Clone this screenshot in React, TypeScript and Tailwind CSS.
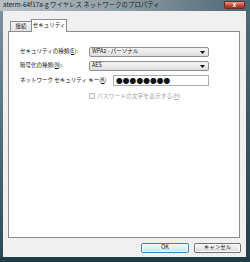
const font = "font-['Meiryo','Noto_Sans_CJK_JP',sans-serif]";

function Arrow() {
  return (
    <svg width="5" height="3" viewBox="0 0 5 3" className="shrink-0">
      <path d="M0 0h5L2.5 3z" fill="#111" />
    </svg>
  );
}

function Combo({ value }: { value: string }) {
  return (
    <div className="w-[120px] h-[10px] flex items-center pl-[2px] pr-[3px] rounded-[2px] border border-[#8e8f8f] bg-gradient-to-b from-[#f4f4f4] via-[#ebebeb] to-[#dcdcdc] text-[5.5px] leading-none text-[#111]">
      <span className="flex-1">{value}</span>
      <Arrow />
    </div>
  );
}

export default function App() {
  return (
    <div className={`w-[250px] h-[262px] flex flex-col bg-[#2b4754] ${font}`}>
      {/* title bar */}
      <div className="h-[11px] flex items-start pl-[3px] pr-[5px] bg-gradient-to-r from-[#b8c2c6] via-[#8d9ca3] to-[#4b6672]">
        <span className="mt-[2px] text-[6.4px] leading-none text-[#1c1c1c] whitespace-nowrap">
          aterm-64f17a-g ワイヤレス ネットワークのプロパティ
        </span>
        <div className="ml-auto mt-[1px] w-[21px] h-[8px] flex items-center justify-center rounded-b-[2px] border border-[#6b2a24] bg-gradient-to-b from-[#e59a8c] via-[#c9513f] to-[#a9281a]">
          <span className="text-[6px] leading-none font-bold text-white">x</span>
        </div>
      </div>

      <div className="flex-1 flex">
        <div className="w-[3px] bg-gradient-to-b from-[#7e939c] to-[#2a4a58]" />
        <div className="flex-1 flex flex-col bg-[#f0f0f0] pt-[8px] pl-[5px] pr-[6px] pb-[4px]">
          {/* tabs */}
          <div className="flex items-end pl-[2px] h-[12px] text-[5.5px] leading-none text-[#111]">
            <div className="h-[10px] w-[22px] flex items-center justify-center border border-b-0 border-[#898c95] bg-gradient-to-b from-[#f6f6f6] to-[#e3e3e3]">
              接続
            </div>
            <div className="relative z-10 -mb-px h-[13px] w-[36px] flex items-center justify-center border border-b-0 border-[#898c95] bg-white -ml-px">
              セキュリティ
            </div>
          </div>

          {/* panel */}
          <div className="flex-1 border border-[#898c95] bg-white pt-[15px] pl-[11px] text-[5.5px] leading-none text-[#111]">
            <div className="flex flex-col gap-[4px] w-[189px]">
              <div className="flex items-center">
                <span className="w-[69px]">セキュリティの種類(<u>E</u>):</span>
                <Combo value="WPA2 - パーソナル" />
              </div>
              <div className="flex items-center">
                <span className="w-[69px]">暗号化の種類(<u>N</u>):</span>
                <Combo value="AES" />
              </div>
              <div className="flex items-center">
                <span>ネットワーク セキュリティ キー(<u>K</u>)</span>
                <div className="ml-auto w-[96px] h-[11px] flex items-center pl-[2px] border border-[#abadb3] bg-white text-[6.6px] leading-none tracking-[0.2px] text-[#111]">
                  ●●●●●●●●
                </div>
              </div>
            </div>
            <div className="flex items-center ml-[69px] mt-[7px] gap-[2px]">
              <div className="w-[6px] h-[6px] border border-[#c2c2c2] bg-[#f4f4f4]" />
              <span className="text-[5.8px] text-[#a3a3a3]">パスワードの文字を表示する(<u>H</u>)</span>
            </div>
          </div>

          {/* buttons */}
          <div className="flex justify-end gap-[5px] mt-[5px] -mr-px text-[5.5px] leading-none text-[#111]">
            <div className="w-[48px] h-[10px] flex items-center justify-center rounded-[2px] border border-[#3c7fb1] bg-gradient-to-b from-[#eaf6fd] via-[#d9f0fc] to-[#bee6fd] shadow-[inset_0_0_0_1px_#ffffff]">
              OK
            </div>
            <div className="w-[47px] h-[10px] flex items-center justify-center rounded-[2px] border border-[#707070] bg-gradient-to-b from-[#f2f2f2] via-[#ebebeb] to-[#d6d6d6] shadow-[inset_0_0_0_1px_#fcfcfc]">
              キャンセル
            </div>
          </div>
        </div>
        <div className="w-[4px] bg-gradient-to-b from-[#4e6a76] to-[#23404d]" />
      </div>
      <div className="h-[5px] bg-[#203c49]" />
    </div>
  );
}
